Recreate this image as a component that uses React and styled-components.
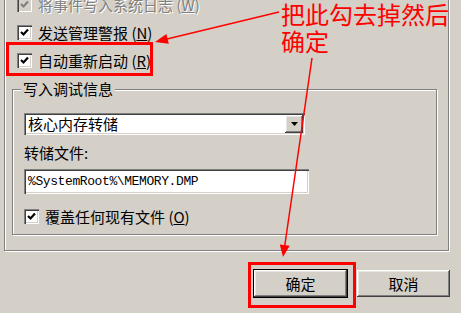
import React from 'react';
import styled, { createGlobalStyle } from 'styled-components';

const sunken =
  'inset 1px 1px #808080, inset 2px 2px #404040, inset -1px -1px #fff, inset -2px -2px #d4d0c8';
const raised =
  'inset -1px -1px #404040, inset 1px 1px #fff, inset -2px -2px #808080, inset 2px 2px #e8e6e0';

const GlobalStyle = createGlobalStyle`
  html, body {
    margin: 0;
    padding: 0;
    background: #d4d0c8;
  }
  body {
    font-family: "Noto Sans CJK SC", "Liberation Sans", sans-serif;
  }
`;

const Page = styled.div`
  display: flow-root;
  position: relative;
  width: 461px;
  height: 313px;
  overflow: hidden;
  background: #d4d0c8;
  color: #000;
  font-size: 15px;
  line-height: 15px;
`;

// tab page border, its top runs above the crop
const Frame = styled.div`
  margin: -20px 0 0 4px;
  width: 445px;
  box-sizing: border-box;
  padding: 16px 11px 15px 7px;
  border: 1px solid #808080;
  box-shadow: inset 1px 1px #fff, 1px 1px #fff;
`;

const CheckRow = styled.div`
  display: flex;
  align-items: center;
  gap: 6px;
  height: 15px;
  margin: ${(p) => p.$margin || '0 0 13px 5px'};
  white-space: nowrap;
  color: ${(p) => (p.$disabled ? '#808080' : '#000')};
  text-shadow: ${(p) => (p.$disabled ? '1px 1px #fff' : 'none')};
`;

const Box = styled.span`
  flex: none;
  width: 15px;
  height: 15px;
  box-sizing: border-box;
  display: flex;
  align-items: center;
  justify-content: center;
  background: ${(p) => (p.$disabled ? '#d4d0c8' : '#fff')};
  box-shadow: ${sunken};
`;

const Group = styled.fieldset`
  margin: 1px 0 0;
  padding: 16px 0 10px 11px;
  min-width: 0;
  border: 1px solid #808080;
  box-shadow: inset 1px 1px #fff, 1px 1px #fff;
`;

const Legend = styled.legend`
  margin-left: -3px;
  padding: 0 2px;
  background: #d4d0c8;
  line-height: 16px;
`;

const Combo = styled.div`
  display: flex;
  align-items: center;
  width: 281px;
  height: 22px;
  box-sizing: border-box;
  padding: 2px;
  background: #fff;
  box-shadow: ${sunken};
`;

const ComboText = styled.span`
  flex: 1;
  padding-left: 2px;
  line-height: 18px;
`;

const DropButton = styled.span`
  flex: none;
  width: 18px;
  height: 18px;
  display: flex;
  align-items: center;
  justify-content: center;
  background: #d4d0c8;
  box-shadow: ${raised};
`;

const Label = styled.div`
  margin-top: 10px;
  line-height: 16px;
`;

const Field = styled.div`
  margin-top: 8px;
  width: 285px;
  height: 25px;
  box-sizing: border-box;
  padding: 0 4px;
  display: flex;
  align-items: center;
  background: #fff;
  box-shadow: ${sunken};
  font-family: "Liberation Mono", monospace;
  font-size: 13px;
  letter-spacing: -0.4px;
`;

const Buttons = styled.div`
  display: flex;
  justify-content: flex-end;
  gap: 8px;
  margin-top: 18px;
  padding-right: 10px;
`;

const Button = styled.div`
  width: 95px;
  height: 29px;
  box-sizing: border-box;
  display: flex;
  align-items: center;
  justify-content: center;
  background: #d4d0c8;
  border: 1px solid ${(p) => (p.$default ? '#000' : 'transparent')};
  box-shadow: ${raised};
`;

const Mark = styled.div`
  position: absolute;
  left: ${(p) => p.$x}px;
  top: ${(p) => p.$y}px;
  width: ${(p) => p.$w}px;
  height: ${(p) => p.$h}px;
  box-sizing: border-box;
  border: 3px solid #f00;
  pointer-events: none;
`;

const Note = styled.div`
  position: absolute;
  left: 281px;
  top: 0;
  color: #f00;
  font-size: 24px;
  line-height: 27px;
  white-space: pre;
`;

const Overlay = styled.svg`
  position: absolute;
  left: 0;
  top: 0;
  pointer-events: none;
`;

const Check = ({ disabled }) => (
  <Box $disabled={disabled}>
    <svg width='9' height='9' viewBox='0 0 9 9'>
      <path d='M1 4 L3.5 6.5 L8 1.6' fill='none' stroke={disabled ? '#808080' : '#000'} strokeWidth='2.2' />
    </svg>
  </Box>
);

const Key = ({ k }) => (
  <>
    {' ('}
    <u>{k}</u>
    {')'}
  </>
);

export default function App() {
  return (
    <Page>
      <GlobalStyle />
      <Frame>
        <CheckRow $disabled>
          <Check disabled />
          <span>
            将事件写入系统日志
            <Key k='W' />
          </span>
        </CheckRow>
        <CheckRow>
          <Check />
          <span>
            发送管理警报
            <Key k='N' />
          </span>
        </CheckRow>
        <CheckRow>
          <Check />
          <span>
            自动重新启动
            <Key k='R' />
          </span>
        </CheckRow>
        <Group>
          <Legend>写入调试信息</Legend>
          <Combo>
            <ComboText>核心内存转储</ComboText>
            <DropButton>
              <svg width='7' height='4' viewBox='0 0 7 4'>
                <path d='M0 0 H7 L3.5 4 Z' fill='#000' />
              </svg>
            </DropButton>
          </Combo>
          <Label>转储文件:</Label>
          <Field>%SystemRoot%\MEMORY.DMP</Field>
          <CheckRow $margin='15px 0 0 0'>
            <Check />
            <span>
              覆盖任何现有文件
              <Key k='O' />
            </span>
          </CheckRow>
        </Group>
      </Frame>
      <Buttons>
        <Button $default>确定</Button>
        <Button>取消</Button>
      </Buttons>

      <Mark $x={6} $y={42} $w={147} $h={34} />
      <Mark $x={248} $y={262} $w={108} $h={46} />
      <Note>{'把此勾去掉然后\n确定'}</Note>
      <Overlay width='461' height='313'>
        <line x1='279' y1='12' x2='167' y2='39' stroke='#f00' strokeWidth='1.5' />
        <polygon points='155,42 168.8,43.8 166.4,34' fill='#f00' />
        <line x1='312' y1='58' x2='284.7' y2='246' stroke='#f00' strokeWidth='1.5' />
        <polygon points='283,257 289.7,245.8 279.8,244.4' fill='#f00' />
      </Overlay>
    </Page>
  );
}
